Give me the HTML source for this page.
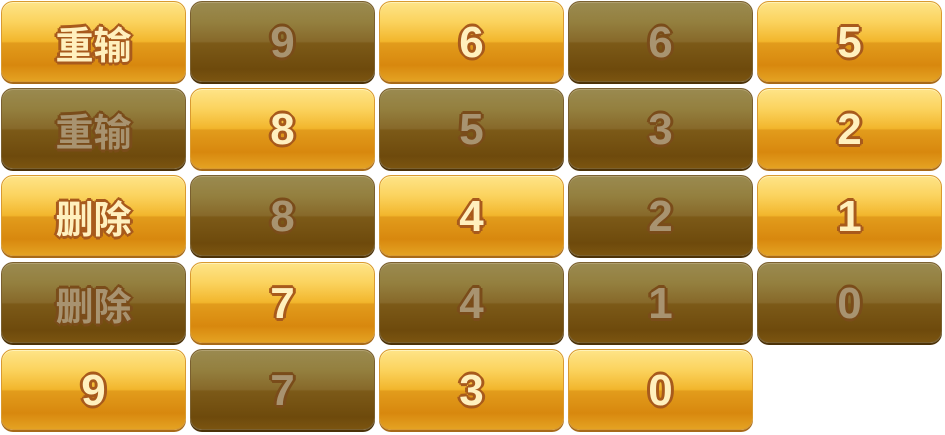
<!DOCTYPE html>
<html><head><meta charset="utf-8"><style>
html,body{margin:0;padding:0;background:#fff;width:945px;height:435px;overflow:hidden}
.b{position:absolute;width:185px;height:81px;border-radius:12px;box-sizing:border-box;
font:bold 44px "Liberation Sans","Noto Sans CJK SC",sans-serif;display:flex;align-items:center;justify-content:center;overflow:hidden;
--s:#a85a1c}
.b span{position:relative;top:1px;
text-shadow:2px 0 var(--s),-2px 0 var(--s),0 2px var(--s),0 -2px var(--s),1.5px 1.5px var(--s),-1.5px 1.5px var(--s),1.5px -1.5px var(--s),-1.5px -1.5px var(--s),3px 0 var(--s),-3px 0 var(--s),0 3px var(--s),0 -3px var(--s)}
.c span{font-size:38px}
.y{background:linear-gradient(#fee488 0%,#fbd35e 25%,#f2b62c 50%,#e29c1c 52%,#d8880e 80%,#e4a222 100%);
border:1px solid #d99a30;box-shadow:0 2px 0 #a86a18,inset 0 1px 0 #fff2b8;color:#fff0be}
.d{background:linear-gradient(#9a8a50 0%,#94803f 25%,#87692a 50%,#7c5a18 52%,#6e4a0c 85%,#7a5410 100%);
border:1px solid #7a6030;box-shadow:0 2px 0 #4c3208,inset 0 1px 0 #b0a070;color:#a89370;--s:#7a4c1a}
</style></head><body>
<div class="b y c" style="left:1px;top:1px"><span>重输</span></div>
<div class="b d" style="left:190px;top:1px"><span>9</span></div>
<div class="b y" style="left:379px;top:1px"><span>6</span></div>
<div class="b d" style="left:568px;top:1px"><span>6</span></div>
<div class="b y" style="left:757px;top:1px"><span>5</span></div>

<div class="b d c" style="left:1px;top:88px"><span>重输</span></div>
<div class="b y" style="left:190px;top:88px"><span>8</span></div>
<div class="b d" style="left:379px;top:88px"><span>5</span></div>
<div class="b d" style="left:568px;top:88px"><span>3</span></div>
<div class="b y" style="left:757px;top:88px"><span>2</span></div>

<div class="b y c" style="left:1px;top:175px"><span>删除</span></div>
<div class="b d" style="left:190px;top:175px"><span>8</span></div>
<div class="b y" style="left:379px;top:175px"><span>4</span></div>
<div class="b d" style="left:568px;top:175px"><span>2</span></div>
<div class="b y" style="left:757px;top:175px"><span>1</span></div>

<div class="b d c" style="left:1px;top:262px"><span>删除</span></div>
<div class="b y" style="left:190px;top:262px"><span>7</span></div>
<div class="b d" style="left:379px;top:262px"><span>4</span></div>
<div class="b d" style="left:568px;top:262px"><span>1</span></div>
<div class="b d" style="left:757px;top:262px"><span>0</span></div>

<div class="b y" style="left:1px;top:349px"><span>9</span></div>
<div class="b d" style="left:190px;top:349px"><span>7</span></div>
<div class="b y" style="left:379px;top:349px"><span>3</span></div>
<div class="b y" style="left:568px;top:349px"><span>0</span></div>
</body></html>
